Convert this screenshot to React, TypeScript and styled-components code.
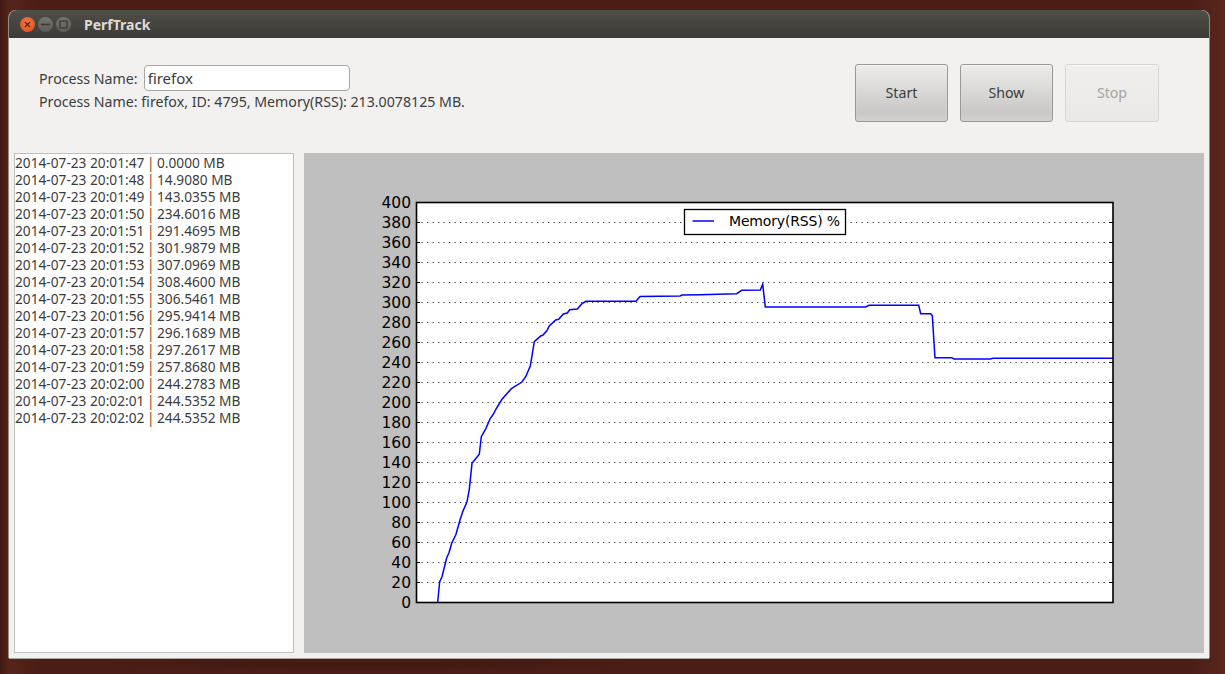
import { FC } from "react";
import styled, { createGlobalStyle } from "styled-components";

const GlobalStyle = createGlobalStyle`
  html, body {
    margin: 0;
    padding: 0;
    width: 1225px;
    height: 674px;
    overflow: hidden;
  }
`;

const logRows = [
  ["2014-07-23 20:01:47", "0.0000 MB"],
  ["2014-07-23 20:01:48", "14.9080 MB"],
  ["2014-07-23 20:01:49", "143.0355 MB"],
  ["2014-07-23 20:01:50", "234.6016 MB"],
  ["2014-07-23 20:01:51", "291.4695 MB"],
  ["2014-07-23 20:01:52", "301.9879 MB"],
  ["2014-07-23 20:01:53", "307.0969 MB"],
  ["2014-07-23 20:01:54", "308.4600 MB"],
  ["2014-07-23 20:01:55", "306.5461 MB"],
  ["2014-07-23 20:01:56", "295.9414 MB"],
  ["2014-07-23 20:01:57", "296.1689 MB"],
  ["2014-07-23 20:01:58", "297.2617 MB"],
  ["2014-07-23 20:01:59", "257.8680 MB"],
  ["2014-07-23 20:02:00", "244.2783 MB"],
  ["2014-07-23 20:02:01", "244.5352 MB"],
  ["2014-07-23 20:02:02", "244.5352 MB"],
];

const linePoints =
  "437.7,602 439.7,581.7 442,576.7 446.7,557.7 449,552.7 451.7,543.3 456,534.3 460,520 462.7,511.7 467,501.7 469.3,489.3 " +
  "472,463.3 479.3,454.3 481.3,436.7 486,428.3 490.3,418.3 493.3,414.3 496,409 502,399.3 511.7,388.3 521.7,382.3 525.7,376.7 " +
  "530.3,366 534.3,341.7 540.7,336 542.7,335.3 546.7,331 549.3,326 555.7,320 558.7,319.3 563.3,314 567.3,313 569.7,309.7 " +
  "577.3,309 582,303.7 586,301.3 636,301.3 640,296.5 680,296 682,295 700,294.7 736.7,293.7 741.7,290.3 760.3,290 762.7,284.3 " +
  "765.3,307 865.7,307 869,305.3 918.7,305.3 920.7,313.7 930.7,313.7 932.3,315.7 935,357.7 951.7,357.7 954,359 990,359 " +
  "993.3,358.3 1113,358.3";

const ticks = Array.from({ length: 21 }, (_, i) => i * 20);

const Desktop = styled.div`
  width: 1225px;
  height: 674px;
  box-sizing: border-box;
  padding: 10px 16px 16px 9px;
  background-color: #4b1d15;
  background-image:
    radial-gradient(ellipse 300px 8px at 30% 664px, rgba(0, 0, 0, 0.12), transparent),
    linear-gradient(90deg, #3f1811 0, #56251a 9px, #4b1d15 40px, #4b1d15 1190px, #5a281c 1225px);
`;

const Window = styled.div`
  width: 1200px;
  height: 648px;
  display: flex;
  flex-direction: column;
  background: #f2f1f0;
  border-radius: 8px 8px 0 0;
  box-shadow: 0 1px 0 #a9a8a4, 1px 0 0 #8f8d88, -1px 0 0 #8f8d88;
  overflow: hidden;
`;

const TitleBar = styled.div`
  height: 28px;
  flex: none;
  display: flex;
  align-items: center;
  padding-left: 11px;
  background: linear-gradient(#4f4e49, #3c3b37);
`;

const WindowControl = styled.span<{ $variant: "close" | "other" }>`
  width: 15px;
  height: 15px;
  margin-right: 3px;
  border-radius: 50%;
  display: flex;
  align-items: center;
  justify-content: center;
  background: ${(p) =>
    p.$variant === "close"
      ? "radial-gradient(circle at 50% 35%, #f2774a, #dd4a1c)"
      : "linear-gradient(#75746f, #5c5b56)"};
`;

const WindowTitle = styled.span`
  margin-left: 10px;
  font: 700 14px "Noto Sans", sans-serif;
  color: #dfdbd2;
`;

const ControlBar = styled.div`
  height: 115px;
  flex: none;
  box-sizing: border-box;
  display: flex;
  justify-content: space-between;
  padding: 27px 50px 0 30px;
`;

const ButtonBar = styled.div`
  display: flex;
  gap: 12px;
  margin-top: -1px;
`;

const ProcessForm = styled.div`
  display: flex;
  flex-direction: column;
  gap: 1px;
  font: 400 14.2px "Noto Sans", sans-serif;
  color: #3c3c3c;
`;

const NameRow = styled.div`
  display: flex;
  align-items: center;
  gap: 6px;
`;

const NameInput = styled.input`
  width: 206px;
  height: 26px;
  box-sizing: border-box;
  padding: 0 3px;
  border: 1px solid #a9a7a2;
  border-radius: 4px;
  background: #fff;
  font: 400 15px "Noto Sans", sans-serif;
  color: #3c3c3c;
  outline: none;
`;

const ActionButton = styled.button<{ $disabled?: boolean }>`
  width: ${(p) => (p.$disabled ? 94 : 93)}px;
  height: 58px;
  box-sizing: border-box;
  padding: 0 0 2px;
  border-radius: 3px;
  border: 1px solid ${(p) => (p.$disabled ? "#d6d4d0" : "#9a9895")};
  background: ${(p) =>
    p.$disabled
      ? "linear-gradient(#f0efee, #e9e8e7)"
      : "linear-gradient(#ececeb, #c9c8c7 85%, #d3d2d1)"};
  box-shadow: inset 0 1px 1px rgba(255, 255, 255, 0.6);
  font: 400 14.2px "Noto Sans", sans-serif;
  color: ${(p) => (p.$disabled ? "#a5a4a2" : "#3c3c3c")};
`;

const Workspace = styled.div`
  flex: 1;
  display: flex;
  gap: 10px;
  padding: 0 5px 5px;
  min-height: 0;
`;

const LogList = styled.div`
  width: 280px;
  flex: none;
  box-sizing: border-box;
  background: #fff;
  border: 1px solid #c0bfbc;
  padding: 0;
  font: 400 13.7px/17px "Noto Sans", sans-serif;
  color: #3c3c3c;
`;

const LogRow = styled.div`
  height: 17px;
  white-space: pre;
`;

const Pipe = styled.span`
  color: #8a4f22;
  margin: 0 -1px;
`;

const PlotPanel = styled.div`
  width: 900px;
  flex: none;
  background: #bfbfbf;
`;

const PlotSvg = styled.svg`
  display: block;
  width: 900px;
  height: 500px;
  font-family: "DejaVu Sans", sans-serif;
`;

const MemoryChart: FC = () => (
  <PlotSvg viewBox="304 153 900 500">
    <rect x={416} y={202} width={697} height={400} fill="#fff" />
    {ticks.map((v) => {
      const y = 602 - v;
      return (
        <g key={v}>
          {v > 0 && v < 400 && (
            <line x1={416} x2={1113} y1={y + 0.5} y2={y + 0.5} stroke="#444" strokeWidth={1} strokeDasharray="1.3 4.2" />
          )}
          <line x1={416} x2={420} y1={y + 0.5} y2={y + 0.5} stroke="#000" />
          <line x1={1109} x2={1113} y1={y + 0.5} y2={y + 0.5} stroke="#000" />
          <text x={411} y={y + 6} fontSize={15.5} textAnchor="end" fill="#000">
            {v}
          </text>
        </g>
      );
    })}
    <polyline points={linePoints} fill="none" stroke="#0000ff" strokeWidth={1.5} />
    <rect x={416.5} y={202.5} width={696.5} height={400} fill="none" stroke="#000" strokeWidth={1.6} />
    <rect x={684.5} y={209.5} width={161} height={25} fill="#fff" stroke="#000" strokeWidth={1.3} />
    <line x1={692.5} x2={714} y1={221} y2={221} stroke="#0000ff" strokeWidth={1.5} />
    <text x={729} y={225.5} fontSize={14} textLength={111} fill="#000">
      Memory(RSS) %
    </text>
  </PlotSvg>
);

const App: FC = () => (
  <>
    <GlobalStyle />
    <Desktop>
      <Window>
        <TitleBar>
          <WindowControl $variant="close">
            <svg width="7" height="7" viewBox="0 0 7 7">
              <path d="M1 1l5 5M6 1L1 6" stroke="#5a2010" strokeWidth="1.2" />
            </svg>
          </WindowControl>
          <WindowControl $variant="other">
            <svg width="9" height="3" viewBox="0 0 9 3">
              <path d="M0 1.5h9" stroke="#3c3b37" strokeWidth="1.5" />
            </svg>
          </WindowControl>
          <WindowControl $variant="other">
            <svg width="9" height="9" viewBox="0 0 9 9">
              <rect x="1" y="1" width="7" height="7" fill="none" stroke="#3c3b37" strokeWidth="1.3" />
            </svg>
          </WindowControl>
          <WindowTitle>PerfTrack</WindowTitle>
        </TitleBar>
        <ControlBar>
          <ProcessForm>
            <NameRow>
              <span>Process Name:</span>
              <NameInput defaultValue="firefox" />
            </NameRow>
            <span>Process Name: firefox, ID: 4795, Memory(RSS): 213.0078125 MB.</span>
          </ProcessForm>
          <ButtonBar>
            <ActionButton>Start</ActionButton>
            <ActionButton>Show</ActionButton>
            <ActionButton $disabled>Stop</ActionButton>
          </ButtonBar>
        </ControlBar>
        <Workspace>
          <LogList>
            {logRows.map(([time, mem]) => (
              <LogRow key={time}>
                {time} <Pipe>|</Pipe> {mem}
              </LogRow>
            ))}
          </LogList>
          <PlotPanel>
            <MemoryChart />
          </PlotPanel>
        </Workspace>
      </Window>
    </Desktop>
  </>
);

export default App;
